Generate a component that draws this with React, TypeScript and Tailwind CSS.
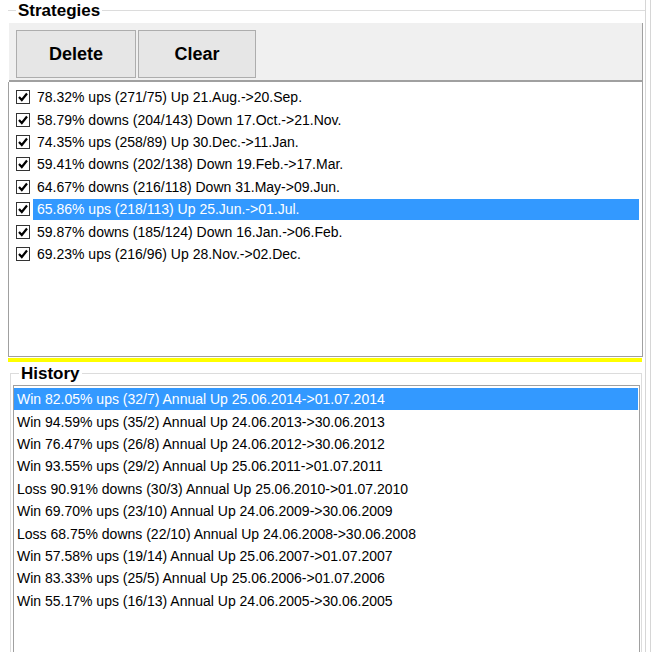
import type { ReactNode } from 'react'

const strategies = [
  '78.32% ups (271/75) Up 21.Aug.->20.Sep.',
  '58.79% downs (204/143) Down 17.Oct.->21.Nov.',
  '74.35% ups (258/89) Up 30.Dec.->11.Jan.',
  '59.41% downs (202/138) Down 19.Feb.->17.Mar.',
  '64.67% downs (216/118) Down 31.May->09.Jun.',
  '65.86% ups (218/113) Up 25.Jun.->01.Jul.',
  '59.87% downs (185/124) Down 16.Jan.->06.Feb.',
  '69.23% ups (216/96) Up 28.Nov.->02.Dec.',
]

const history = [
  'Win 82.05% ups (32/7) Annual Up 25.06.2014->01.07.2014',
  'Win 94.59% ups (35/2) Annual Up 24.06.2013->30.06.2013',
  'Win 76.47% ups (26/8) Annual Up 24.06.2012->30.06.2012',
  'Win 93.55% ups (29/2) Annual Up 25.06.2011->01.07.2011',
  'Loss 90.91% downs (30/3) Annual Up 25.06.2010->01.07.2010',
  'Win 69.70% ups (23/10) Annual Up 24.06.2009->30.06.2009',
  'Loss 68.75% downs (22/10) Annual Up 24.06.2008->30.06.2008',
  'Win 57.58% ups (19/14) Annual Up 25.06.2007->01.07.2007',
  'Win 83.33% ups (25/5) Annual Up 25.06.2006->01.07.2006',
  'Win 55.17% ups (16/13) Annual Up 24.06.2005->30.06.2005',
]

const selectedStrategy = 5
const selectedHistory = 0

type GroupTitleProps = {
  children: ReactNode
  className: string
  lead: string
}

function GroupTitle({ children, className, lead }: GroupTitleProps) {
  return (
    <div className={`flex h-[21px] shrink-0 items-center ${className}`}>
      <div className={`h-px bg-[#dcdcdc] ${lead}`} />
      <span className="px-[2px] text-[17px] font-bold leading-none text-black">{children}</span>
      <div className="h-px flex-1 bg-[#dcdcdc]" />
    </div>
  )
}

function CheckBox() {
  return (
    <svg width="14" height="14" viewBox="0 0 14 14" className="shrink-0">
      <rect x="0.5" y="0.5" width="13" height="13" fill="#fff" stroke="#333" />
      <path d="M3 7 L5.8 10 L11 3.5" fill="none" stroke="#000" strokeWidth="2.2" />
    </svg>
  )
}

function ToolButton({ label, width }: { label: string; width: string }) {
  return (
    <button
      className={`${width} h-[48px] border border-[#adadad] bg-[#e6e6e6] text-[18px] font-bold text-black`}
      type="button"
    >
      {label}
    </button>
  )
}

export default function App() {
  return (
    <div
      className="flex h-[652px] w-[653px] overflow-hidden bg-white text-black"
      style={{ fontFamily: '"Liberation Sans", Arial, sans-serif' }}
    >
      <div className="flex w-[645px] shrink-0 flex-col">
        {/* Strategies */}
        <GroupTitle className="ml-[8px]" lead="w-[8px]">
          Strategies
        </GroupTitle>
        <div className="mt-[2px] ml-[9px] flex h-[59px] w-[634px] shrink-0 gap-[2px] border-r border-b-2 border-[#a0a0a0] bg-[#f0f0f0] pt-[7px] pl-[7px]">
          <ToolButton label="Delete" width="w-[120px]" />
          <ToolButton label="Clear" width="w-[118px]" />
        </div>
        <div className="ml-[8px] h-[275px] w-[635px] shrink-0 border border-t-0 border-[#a0a0a0] pt-[4px]">
          {strategies.map((item, i) => (
            <div key={item} className="flex h-[22.4px] items-center pl-[7px]">
              <CheckBox />
              <div
                className={`ml-[3px] mr-[3px] flex h-[21px] flex-1 items-center pl-[4px] text-[14px] leading-none ${
                  i === selectedStrategy ? 'bg-[#3399ff] text-white' : ''
                }`}
              >
                {item}
              </div>
            </div>
          ))}
        </div>
        <div className="mt-[1px] ml-[8px] h-[4px] w-[634px] shrink-0 bg-[#ffff00]" />

        {/* History */}
        <GroupTitle className="mt-[1px] ml-[10px] w-[632px]" lead="w-[9px]">
          History
        </GroupTitle>
        <div className="-mt-[10px] ml-[10px] flex h-[300px] w-[632px] shrink-0 flex-col border-x border-[#dcdcdc] pt-[11px]">
          <div className="ml-[2px] h-[300px] w-[627px] shrink-0 border border-[#a0a0a0] pt-[2px]">
            {history.map((item, i) => (
              <div
                key={item}
                className={`mr-[1px] flex h-[22.4px] items-center pl-[3px] text-[14px] leading-none ${
                  i === selectedHistory ? 'bg-[#3399ff] text-white' : ''
                }`}
              >
                {item}
              </div>
            ))}
          </div>
        </div>
      </div>

      {/* window edge */}
      <div className="flex shrink-0">
        <div className="w-[5px] border-l border-[#d6d6d6]" />
        <div className="w-[3px] border-l border-[#d6d6d6]" />
      </div>
    </div>
  )
}
